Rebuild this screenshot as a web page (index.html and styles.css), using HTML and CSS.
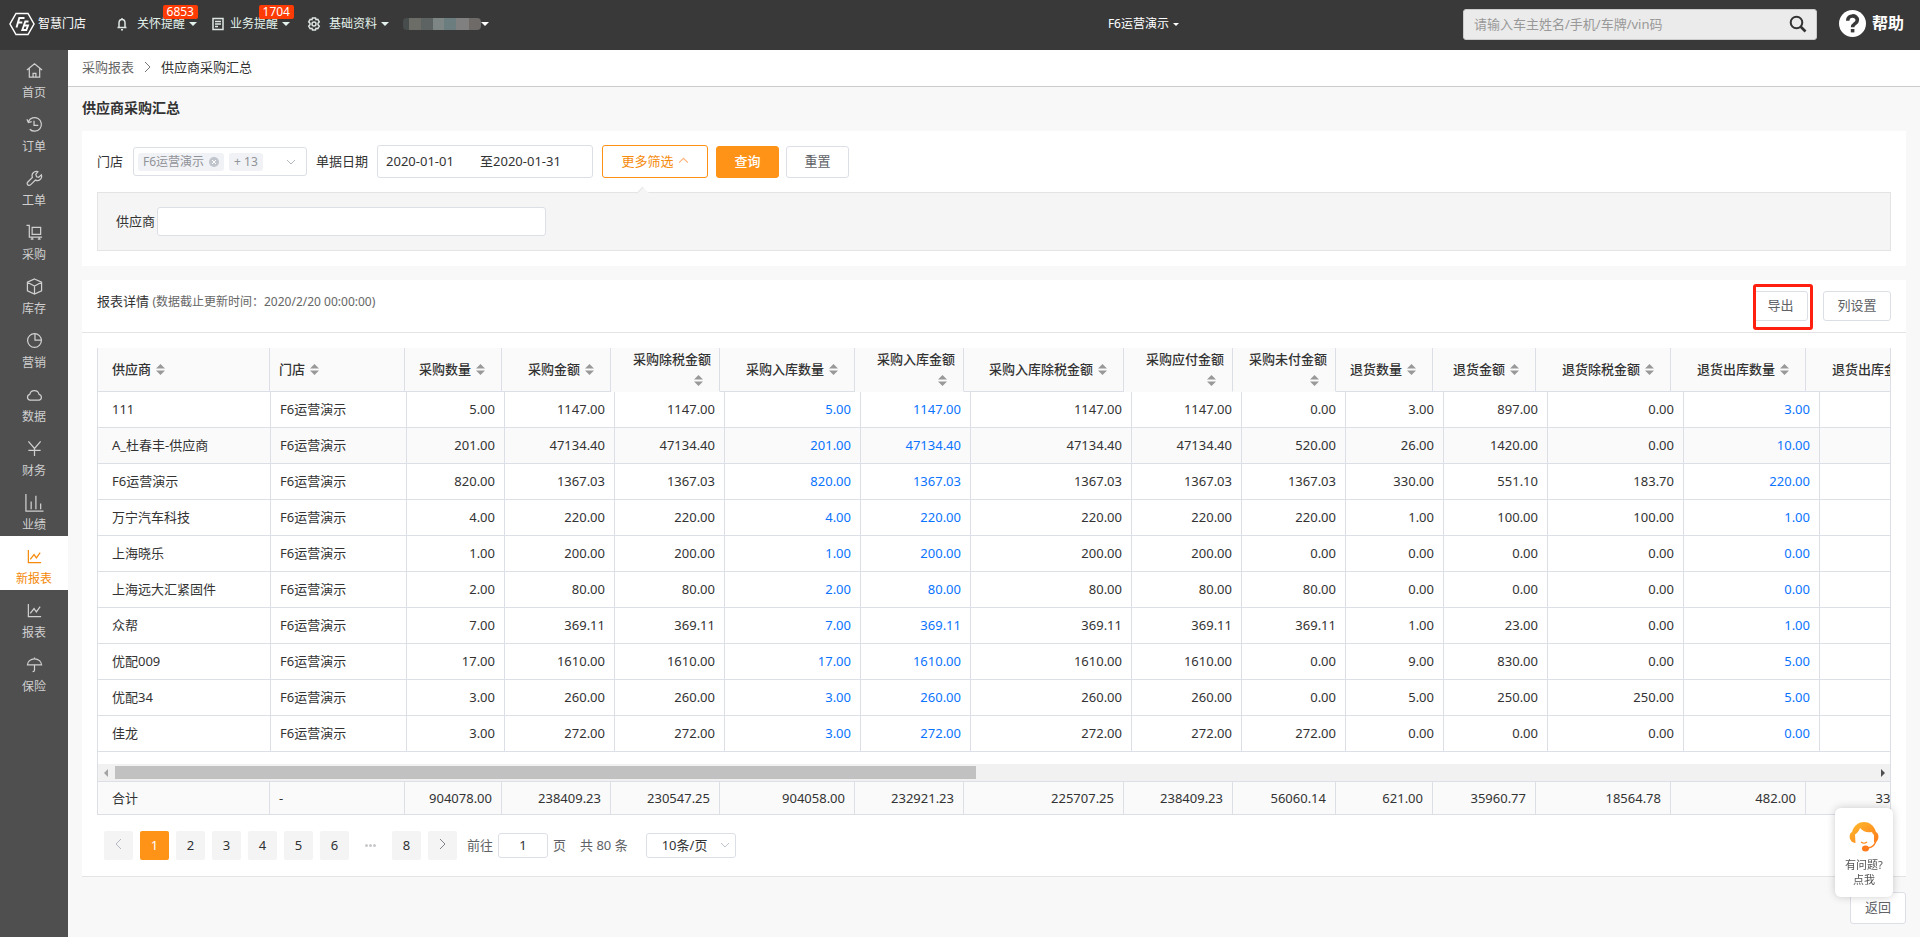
FILE: index.html
```html
<!DOCTYPE html>
<html lang="zh-CN">
<head>
<meta charset="utf-8">
<title>供应商采购汇总</title>
<link rel="stylesheet" href="styles.css">
</head>
<body>
<svg class="defs" width="0" height="0" aria-hidden="true">
  <symbol id="sort" viewBox="0 0 9 11"><path d="M4.500 0L9 4.500H0zM4.500 11L0 6.500H9z" fill="#999"/></symbol>
  <symbol id="down" viewBox="0 0 10 10"><path d="M1 3l4 4 4-4" fill="none" stroke="currentColor"/></symbol>
  <symbol id="chart" viewBox="0 0 18 18"><path d="M2.500 2v13.500H16M4.500 12l4-5 2.500 3.500L15 5" fill="none" stroke="currentColor" stroke-width="1.300"/></symbol>
</svg>
<header class="topbar">
  <a class="logo" href="#">
    <svg width="26" height="24" viewBox="0 0 26 24" fill="none" stroke="#fff" stroke-width="1.500"><path d="M7 1.500h12L25 12l-6 10.500H7L1 12z"/><path d="M7.500 15.500l2.800-9.500h5.200M8.800 10.500h4.500M19.500 9.500h-3.200l-3 8.500h4l1.700-4.500h-4" stroke-width="1.900"/></svg>
    <span>智慧门店</span>
  </a>
  <nav class="topnav">
    <button class="navitem"><svg class="navicon" width="14" height="14" viewBox="0 0 14 14" fill="none" stroke="#dde6e4" stroke-width="1.500"><path d="M2.500 10.500h9M4 10V6a3 3.500 0 0 1 6 0v4M6 12.700h2M7 1v1.500"/></svg><span>关怀提醒</span><i class="caret"></i><b class="badge">6853</b></button>
    <button class="navitem"><svg class="navicon" width="14" height="14" viewBox="0 0 14 14" fill="none" stroke="#dde6e4" stroke-width="1.500"><path d="M2 1.500h10v11H2zM4 4.500h6M4 7h6M4 9.500h3"/></svg><span>业务提醒</span><i class="caret"></i><b class="badge">1704</b></button>
    <button class="navitem"><svg class="navicon" width="14" height="14" viewBox="0 0 14 14" fill="none" stroke="#dde6e4" stroke-width="1.500"><path d="M5.500 1h3l.500 1.700 1.800-.400 1.500 2.500L11 6.200v1.600l1.300 1.400-1.500 2.500L9 11.300 8.500 13h-3L5 11.300l-1.800.400-1.500-2.500L3 7.800V6.200L1.700 4.800l1.500-2.500L5 2.700z"/><circle cx="7" cy="7" r="2"/></svg><span>基础资料</span><i class="caret"></i></button>
    <button class="account" aria-label="account"><span class="masked"></span><i class="caret"></i></button>
  </nav>
  <button class="shop">F6运营演示<i class="caret"></i></button>
  <form class="search"><input type="text" aria-label="搜索" placeholder="请输入车主姓名/手机/车牌/vin码"><button type="button" aria-label="搜索"><svg width="18" height="18" viewBox="0 0 18 18" fill="none" stroke="#333" stroke-width="2"><circle cx="7.500" cy="7.500" r="5.800"/><path d="M11.500 11.500l5 5" stroke-width="2.600"/></svg></button></form>
  <a class="help" href="#"><svg width="27" height="27" viewBox="0 0 27 27"><circle cx="13.500" cy="13.500" r="13.500" fill="#fff"/><path d="M8.700 10.800c0-6.600 9.600-6.200 9.600-.600 0 3.600-4.700 3.300-4.700 7" fill="none" stroke="#393939" stroke-width="3.600"/><path d="M11.800 19h3.600v3.400h-3.600z" fill="#393939"/></svg><span>帮助</span></a>
</header>
<div class="frame">
  <nav class="sidebar">
    <a href="#"><svg viewBox="0 0 18 18"><path d="M1 8.500L9 2l8 6.500M3.500 7v9h11V7M7.500 16v-4h3v4"/></svg>首页</a>
    <a href="#"><svg viewBox="0 0 18 18"><path d="M2.500 6A7.200 7.200 0 1 1 4 14M1 3.500l1.500 3.500L6 6M8.500 5v5H13"/></svg>订单</a>
    <a href="#"><svg viewBox="0 0 18 18"><path d="M12.500 1.800a4.500 4.500 0 0 0-5.700 6L1.700 13a2 2 0 0 0 0 2.500 2 2 0 0 0 2.800.500l5.500-5.300a4.500 4.500 0 0 0 6.300-5.500l-2.800 2.500-2.300-.500-.800-2.500z"/></svg>工单</a>
    <a href="#"><svg viewBox="0 0 18 18"><path d="M.500 1.500H3.500v12.300H17M6.500 3.500h9v7.500h-9zM6.500 14v2M14 14v2M5 16h3M12.500 16h3"/></svg>采购</a>
    <a href="#"><svg viewBox="0 0 18 18"><path d="M9 1l7.500 3.500v9L9 17l-7.500-3.500v-9zM1.500 4.500L9 8.500l7.500-4M9 8.500V17"/></svg>库存</a>
    <a href="#"><svg viewBox="0 0 18 18"><circle cx="9" cy="9" r="7.300"/><path d="M9.500 1.700V8.500h7"/></svg>营销</a>
    <a href="#"><svg viewBox="0 0 18 18"><path d="M4 15a3.200 3.200 0 0 1 0-6.200 5 5 0 0 1 9.800 0A3.200 3.200 0 0 1 14 15z"/></svg>数据</a>
    <a href="#"><svg viewBox="0 0 18 18"><path d="M2.500 1.500L9 9l6.500-7.500M9 9v8M2.500 11h13"/></svg>财务</a>
    <a href="#"><svg class="wide" viewBox="0 0 20 20"><path d="M1.500 1v18H20M7 17V9M12 17V3M17 17v-6"/></svg>业绩</a>
    <a href="#" class="active"><svg viewBox="0 0 18 18"><use href="#chart"/></svg>新报表</a>
    <a href="#"><svg viewBox="0 0 18 18"><use href="#chart"/></svg>报表</a>
    <a href="#"><svg viewBox="0 0 18 18"><path d="M1.500 9.500a7.500 6.500 0 0 1 15 0zM9 1.500V3M9 9.500v5.500q0 1.500-2 1.500"/></svg>保险</a>
  </nav>
  <main class="content">
    <div class="crumbs"><a href="#">采购报表</a><svg width="7" height="12" viewBox="0 0 7 12" fill="none" stroke="#777"><path d="M1 1l5 5-5 5"/></svg><span>供应商采购汇总</span></div>
    <div class="page">
      <h1>供应商采购汇总</h1>
      <section class="panel filter">
        <div class="filterrow">
          <span>门店</span>
          <button class="store"><span class="tag">F6运营演示<svg width="10" height="10" viewBox="0 0 10 10"><circle cx="5" cy="5" r="5" fill="#c0c4cc"/><path d="M3 3l4 4M7 3L3 7" stroke="#fff"/></svg></span><span class="tag">+ 13</span><svg class="chev" width="10" height="10"><use href="#down"/></svg></button>
          <label class="datelabel" for="from">单据日期</label>
          <div class="dates"><input id="from" type="text" value="2020-01-01"><label for="to">至</label><input id="to" type="text" value="2020-01-31"></div>
          <button class="btn more">更多筛选<svg width="11" height="11" viewBox="0 0 10 10" fill="none" stroke="#ffb27a"><path d="M1 7l4-4 4 4"/></svg></button>
          <button class="btn primary">查询</button>
          <button class="btn">重置</button>
        </div>
        <div class="morebox"><label for="supplier">供应商</label><input id="supplier" type="text"></div>
      </section>
      <section class="panel report">
        <div class="reporthead">
          <h2>报表详情 <small>(数据截止更新时间：2020/2/20 00:00:00)</small></h2>
          <span class="export"><button class="btn small">导出</button></span>
          <button class="btn small">列设置</button>
        </div>
        <div class="grid">
          <table class="head">
            <colgroup><col class="h1"><col class="h2"><col class="h3"><col class="h4"><col class="h4"><col class="h2"><col class="h4"><col class="h5"><col class="h4"><col class="h6"><col class="h3"><col class="h6"><col class="h2"><col class="h2"><col class="h2"></colgroup>
            <tr>
              <th>供应商<svg><use href="#sort"/></svg></th><th>门店<svg><use href="#sort"/></svg></th><th>采购数量<svg><use href="#sort"/></svg></th><th>采购金额<svg><use href="#sort"/></svg></th><th class="tall">采购除税金额<svg><use href="#sort"/></svg></th><th>采购入库数量<svg><use href="#sort"/></svg></th><th class="tall">采购入库金额<svg><use href="#sort"/></svg></th><th>采购入库除税金额<svg><use href="#sort"/></svg></th><th class="tall">采购应付金额<svg><use href="#sort"/></svg></th><th class="tall">采购未付金额<svg><use href="#sort"/></svg></th><th>退货数量<svg><use href="#sort"/></svg></th><th>退货金额<svg><use href="#sort"/></svg></th><th>退货除税金额<svg><use href="#sort"/></svg></th><th>退货出库数量<svg><use href="#sort"/></svg></th><th>退货出库金额<svg><use href="#sort"/></svg></th>
            </tr>
          </table>
          <table class="rows">
            <colgroup><col class="b1"><col class="b2"><col class="b3"><col class="b4"><col class="b4"><col class="b2"><col class="b4"><col class="b5"><col class="b4"><col class="b6"><col class="b3"><col class="b6"><col class="b2"><col class="b2"><col class="b2"></colgroup>
            <tr><td>111</td><td>F6运营演示</td><td>5.00</td><td>1147.00</td><td>1147.00</td><td><a href="#">5.00</a></td><td><a href="#">1147.00</a></td><td>1147.00</td><td>1147.00</td><td>0.00</td><td>3.00</td><td>897.00</td><td>0.00</td><td><a href="#">3.00</a></td><td></td></tr>
            <tr class="hover"><td>A_杜春丰-供应商</td><td>F6运营演示</td><td>201.00</td><td>47134.40</td><td>47134.40</td><td><a href="#">201.00</a></td><td><a href="#">47134.40</a></td><td>47134.40</td><td>47134.40</td><td>520.00</td><td>26.00</td><td>1420.00</td><td>0.00</td><td><a href="#">10.00</a></td><td></td></tr>
            <tr><td>F6运营演示</td><td>F6运营演示</td><td>820.00</td><td>1367.03</td><td>1367.03</td><td><a href="#">820.00</a></td><td><a href="#">1367.03</a></td><td>1367.03</td><td>1367.03</td><td>1367.03</td><td>330.00</td><td>551.10</td><td>183.70</td><td><a href="#">220.00</a></td><td></td></tr>
            <tr><td>万宁汽车科技</td><td>F6运营演示</td><td>4.00</td><td>220.00</td><td>220.00</td><td><a href="#">4.00</a></td><td><a href="#">220.00</a></td><td>220.00</td><td>220.00</td><td>220.00</td><td>1.00</td><td>100.00</td><td>100.00</td><td><a href="#">1.00</a></td><td></td></tr>
            <tr><td>上海晓乐</td><td>F6运营演示</td><td>1.00</td><td>200.00</td><td>200.00</td><td><a href="#">1.00</a></td><td><a href="#">200.00</a></td><td>200.00</td><td>200.00</td><td>0.00</td><td>0.00</td><td>0.00</td><td>0.00</td><td><a href="#">0.00</a></td><td></td></tr>
            <tr><td>上海远大汇紧固件</td><td>F6运营演示</td><td>2.00</td><td>80.00</td><td>80.00</td><td><a href="#">2.00</a></td><td><a href="#">80.00</a></td><td>80.00</td><td>80.00</td><td>80.00</td><td>0.00</td><td>0.00</td><td>0.00</td><td><a href="#">0.00</a></td><td></td></tr>
            <tr><td>众帮</td><td>F6运营演示</td><td>7.00</td><td>369.11</td><td>369.11</td><td><a href="#">7.00</a></td><td><a href="#">369.11</a></td><td>369.11</td><td>369.11</td><td>369.11</td><td>1.00</td><td>23.00</td><td>0.00</td><td><a href="#">1.00</a></td><td></td></tr>
            <tr><td>优配009</td><td>F6运营演示</td><td>17.00</td><td>1610.00</td><td>1610.00</td><td><a href="#">17.00</a></td><td><a href="#">1610.00</a></td><td>1610.00</td><td>1610.00</td><td>0.00</td><td>9.00</td><td>830.00</td><td>0.00</td><td><a href="#">5.00</a></td><td></td></tr>
            <tr><td>优配34</td><td>F6运营演示</td><td>3.00</td><td>260.00</td><td>260.00</td><td><a href="#">3.00</a></td><td><a href="#">260.00</a></td><td>260.00</td><td>260.00</td><td>0.00</td><td>5.00</td><td>250.00</td><td>250.00</td><td><a href="#">5.00</a></td><td></td></tr>
            <tr><td>佳龙</td><td>F6运营演示</td><td>3.00</td><td>272.00</td><td>272.00</td><td><a href="#">3.00</a></td><td><a href="#">272.00</a></td><td>272.00</td><td>272.00</td><td>272.00</td><td>0.00</td><td>0.00</td><td>0.00</td><td><a href="#">0.00</a></td><td></td></tr>
          </table>
          <div class="scroll"><i class="arrow left"></i><div class="track"><div class="thumb"></div></div><i class="arrow right"></i></div>
          <table class="total">
            <colgroup><col class="h1"><col class="h2"><col class="h3"><col class="h4"><col class="h4"><col class="h2"><col class="h4"><col class="h5"><col class="h4"><col class="h6"><col class="h3"><col class="h6"><col class="h2"><col class="h2"><col class="h2"></colgroup>
            <tr><td>合计</td><td>-</td><td>904078.00</td><td>238409.23</td><td>230547.25</td><td>904058.00</td><td>232921.23</td><td>225707.25</td><td>238409.23</td><td>56060.14</td><td>621.00</td><td>35960.77</td><td>18564.78</td><td>482.00</td><td>33000.00</td></tr>
          </table>
        </div>
        <div class="pager">
          <button class="pg dim" aria-label="上一页"><svg width="7" height="12" viewBox="0 0 7 12" fill="none" stroke="currentColor"><path d="M6 1L1 6l5 5"/></svg></button>
          <button class="pg current">1</button><button class="pg">2</button><button class="pg">3</button><button class="pg">4</button><button class="pg">5</button><button class="pg">6</button>
          <span class="dots"><i></i><i></i><i></i></span>
          <button class="pg">8</button>
          <button class="pg next" aria-label="下一页"><svg width="7" height="12" viewBox="0 0 7 12" fill="none" stroke="currentColor"><path d="M1 1l5 5-5 5"/></svg></button>
          <label class="goto" for="goto">前往</label><input id="goto" type="text" value="1"><span class="unit">页</span>
          <span class="count">共 80 条</span>
          <span class="size"><select aria-label="每页条数"><option>10条/页</option></select><svg width="10" height="10"><use href="#down"/></svg></span>
        </div>
      </section>
      <div class="actions"><button class="btn back">返回</button></div>
    </div>
  </main>
</div>
<button class="chat">
  <svg width="30" height="30" viewBox="0 0 30 30"><defs><linearGradient id="g" x1="0" y1="0" x2="1" y2="1"><stop offset="0" stop-color="#ffbd2e"/><stop offset="1" stop-color="#ff7a1a"/></linearGradient></defs><path d="M3 10C5 3 10 0 15 0s10 3 12 10c3 1 3.500 8 0 10l-2 .500V13c-1-1-1.500-1.500-2-3-5 1-9-.500-12-4-1 3-2.500 5-5 6.500L6.500 21C0 21-1 12 3 10z" fill="url(#g)"/><path d="M12 20q3 2.500 6 0" fill="none" stroke="#ff8a1f" stroke-width="1.200"/><path d="M27 18q-1 7-8 8" fill="none" stroke="#ff8420" stroke-width="1.600"/><ellipse cx="16.500" cy="26.500" rx="3.500" ry="3" fill="#ff7a1a"/></svg>
  <span>有问题?<br>点我</span>
</button>
</body>
</html>
```
FILE: styles.css
```css
* { box-sizing: border-box; }
body { margin: 0; min-height: 100vh; display: flex; flex-direction: column; background: #f8f8f8; color: #333; font: 13px/20px "Noto Sans", "Noto Sans CJK SC", sans-serif; }
button, input, select { font: inherit; color: inherit; margin: 0; padding: 0; border: 0; background: none; }
a { color: inherit; text-decoration: none; }
.defs { position: absolute; }
.caret { display: block; border: 4px solid transparent; border-top-color: currentColor; border-bottom: 0; }

.topbar { height: 50px; flex: none; display: flex; align-items: center; background: #393939; color: #fff; font-size: 12px; padding: 0 16px 2px 9px; }
.logo { display: flex; align-items: center; gap: 3px; width: 106px; }
.topnav { display: flex; flex: 1; }
.navitem { position: relative; display: flex; align-items: center; width: 96px; color: #e4f2ec; }
.navicon { margin-right: 5px; }
.navitem span { margin-right: 4px; white-space: nowrap; }
.navitem:first-child .navicon { margin-right: 8px; }
.navitem:nth-child(3) .navicon { margin-right: 8px; }
.badge { position: absolute; right: 13px; top: -9px; padding: 0 4px; border-radius: 2px; background: #ff3b05; color: #fff; font-weight: 400; line-height: 14px; }
.account { display: flex; align-items: center; color: #fff; }
.masked { width: 78px; height: 12px; border-radius: 4px; background: linear-gradient(90deg, #474c4c 0 8%, #6d6d67 8% 23%, #5d6262 23% 38%, #7d8685 38% 53%, #6b7d7e 53% 68%, #808080 68% 84%, #6d6a68 84%); }
.shop { display: flex; align-items: center; gap: 4px; margin-right: 284px; color: #fff; }
.shop .caret { border-width: 3px; border-bottom: 0; }
.search { display: flex; align-items: center; width: 354px; height: 31px; padding: 0 9px 0 10px; background: #ebebeb; border: 1px solid #ccc; border-radius: 3px; font-size: 13px; }
.search input { flex: 1; color: #333; outline: 0; }
.search input::placeholder { color: #999; }
.search button { display: flex; }
.help { display: flex; align-items: center; gap: 6px; margin-left: 22px; font-size: 16px; font-weight: 700; white-space: nowrap; line-height: 24px; padding-bottom: 2px; }

.frame { flex: 1; display: flex; }
.sidebar { width: 68px; flex: none; background: #4f4f4f; color: #d0d0d0; font-size: 12px; }
.sidebar a { height: 54px; display: flex; flex-direction: column; align-items: center; padding-top: 12px; gap: 5px; line-height: 18px; }
.sidebar svg { width: 17px; height: 17px; fill: none; stroke: currentColor; stroke-width: 1.3; }
.sidebar .wide { width: 20px; height: 19px; margin: -1px 0; }
.sidebar .active { background: #fff; color: #f58a0b; }
.content { flex: 1; min-width: 0; }
.crumbs { height: 37px; display: flex; align-items: center; gap: 10px; padding: 0 0 2px 14px; background: #fff; border-bottom: 1px solid #ccc; }
.crumbs a { color: #666; }
.page { padding: 0 14px; }
h1 { margin: 0; padding-bottom: 2px; font-size: 14px; line-height: 42px; }
.panel { background: #fff; }
.filter { padding: 14px 15px; margin-bottom: 14px; }
.filterrow { display: flex; align-items: center; height: 33px; }
.filterrow > span, .filterrow > label { padding-bottom: 2px; }
.store { display: flex; align-items: center; gap: 5px; width: 174px; height: 29px; margin: 0 9px 0 10px; padding: 0 10px 0 4px; border: 1px solid #dcdfe6; border-radius: 3px; font-size: 12px; }
.tag { display: flex; align-items: center; gap: 5px; padding: 0 5px; line-height: 18px; border-radius: 3px; background: #f0f2f5; color: #909399; white-space: nowrap; }
.chev { margin-left: auto; color: #b4b8c0; }
.datelabel { margin-right: 9px; }
.dates { display: flex; align-items: center; width: 216px; height: 33px; margin-right: 9px; padding: 0 8px 1px; border: 1px solid #dcdfe6; border-radius: 3px; }
.dates input { width: 94px; }
.dates label + input { width: 90px; }
.btn { height: 32px; min-width: 63px; margin-right: 7px; padding-bottom: 2px; border: 1px solid #dcdfe6; border-radius: 3px; background: #fff; color: #606266; }
.more { display: flex; align-items: center; justify-content: center; gap: 4px; width: 106px; height: 33px; margin-right: 8px; border-color: #ff9014; color: #f58a0b; }
.primary { margin-right: 7px; border-color: #ff9318; background: #ff9318; color: #fff; font-weight: 500; }
.morebox { position: relative; display: flex; align-items: center; gap: 2px; height: 59px; margin: 14px 0 1px; padding-left: 18px; border: 1px solid #e4e4e4; background: #f5f5f5; }
.morebox::before { content: ""; position: absolute; left: 540px; top: -4px; width: 9px; height: 9px; transform: rotate(45deg); border-left: 1px solid #e4e4e4; background: #f5f5f5; }
.morebox label { padding-bottom: 2px; }
.morebox input { width: 389px; height: 29px; padding: 0 8px; border: 1px solid #dcdfe6; border-radius: 3px; background: #fff; }

.report { border-bottom: 1px solid #e4e4e4; }
.reporthead { display: flex; align-items: flex-start; height: 53px; padding: 11px 15px 0; border-bottom: 1px solid #e4e4e4; }
h2 { flex: 1; margin: 0; font-size: 13px; font-weight: 400; }
h2 small { font-size: 12px; color: #666; }
.small { height: 30px; min-width: 68px; margin: 0; }
.export { position: relative; margin-right: 15px; }
.export .small { min-width: 55px; }
.export::after { content: ""; position: absolute; inset: -7px -5px -9px 0; border: 3px solid #ff2010; border-radius: 3px; }
.grid { position: relative; margin: 15px 15px 0; overflow: hidden; border: solid #dcdfe6; border-width: 0 1px; }
table { table-layout: fixed; border-collapse: separate; border-spacing: 0; width: 0; }
.h1 { width: 172px; } .h2 { width: 135px; } .h3 { width: 97px; } .h4 { width: 109px; } .h5 { width: 160px; } .h6 { width: 103px; }
.b1 { width: 173px; } .b2 { width: 136px; } .b3 { width: 98px; } .b4 { width: 110px; } .b5 { width: 161px; } .b6 { width: 104px; }
th, td { padding: 0 9px; text-align: right; border: solid #dcdfe6; border-width: 0 1px 1px 0; white-space: nowrap; }
th:first-child, td:first-child { padding-left: 14px; text-align: left; }
th:nth-child(2), td:nth-child(2) { padding-left: 9px; text-align: left; }
th { height: 44px; background: #fafafa; line-height: 21px; font-weight: 500; white-space: normal; }
th svg { width: 9px; height: 11px; margin: 0 7px 0 5px; vertical-align: -1px; }
th.tall { padding-right: 8px; border-bottom-color: transparent; }
.tall svg { margin-right: 8px; }
.rows td { height: 36px; padding-bottom: 2px; }
.hover td { background: #fafafa; }
.rows a { color: #0a74ff; }
.scroll { display: flex; align-items: center; height: 18px; margin-top: 12px; background: #f1f1f1; border-bottom: 1px solid #dcdfe6; }
.arrow { border: 4px solid transparent; }
.left { border-right-color: #a3a3a3; border-left: 0; margin: 0 7px 0 6px; }
.right { border-left-color: #505050; border-right: 0; margin: 0 5px 0 8px; }
.track { flex: 1; }
.thumb { width: 49%; height: 13px; background: #c1c1c1; }
.total td { height: 33px; background: #fafafa; }

.pager { display: flex; align-items: center; height: 61px; padding: 0 22px; color: #606266; }
.pg { width: 29px; height: 29px; margin-right: 7px; padding-bottom: 2px; border-radius: 2px; background: #f4f4f5; color: #303133; }
.pg.dim { color: #b4b8c0; }
.pg.next { color: #808388; margin-right: 10px; }
.pg.current { background: #ff9318; color: #fff; }
.dots { display: flex; justify-content: center; gap: 1px; width: 29px; margin-right: 7px; }
.dots i { width: 3px; height: 3px; border-radius: 50%; background: #c8c8cc; }
.goto, .unit, .count { padding-bottom: 2px; }
.pager input { width: 50px; height: 25px; margin: 0 5px; padding-bottom: 2px; text-align: center; border: 1px solid #dcdfe6; border-radius: 3px; color: #333; }
.count { margin: 0 18px 0 14px; }
.size { position: relative; }
.size select { appearance: none; width: 90px; height: 25px; padding: 0 0 2px 15px; border: 1px solid #dcdfe6; border-radius: 3px; color: #333; }
.size svg { position: absolute; right: 6px; top: 7px; color: #c0c4cc; }
.actions { display: flex; justify-content: flex-end; padding-top: 15px; }
.back { min-width: 56px; margin: 0; }
.chat { position: fixed; right: 27px; bottom: 40px; display: flex; flex-direction: column; align-items: center; gap: 5px; width: 58px; padding: 14px 0 10px; border-radius: 6px; background: #fff; box-shadow: 0 0 8px rgba(0, 0, 0, .2); font-size: 11px; line-height: 15px; color: #555; }
```
